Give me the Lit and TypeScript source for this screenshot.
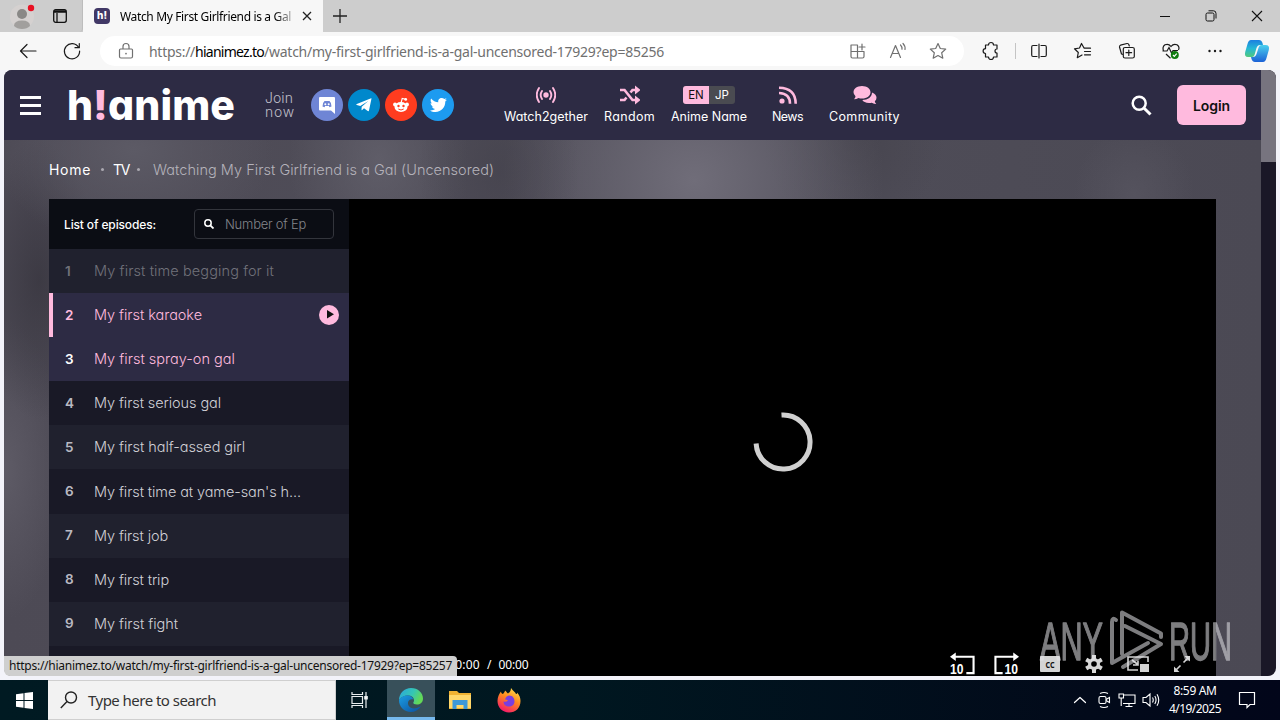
import {LitElement, html, css} from 'lit';
import {customElement, property, state} from 'lit/decorators.js';
import {classMap} from 'lit/directives/class-map.js';

interface Episode {
  no: number;
  title: string;
  width: number;
  seen?: boolean;
}

const episodes: Episode[] = [
  {no: 1, title: 'My first time begging for it', width: 180, seen: true},
  {no: 2, title: 'My first karaoke', width: 108},
  {no: 3, title: 'My first spray-on gal', width: 141},
  {no: 4, title: 'My first serious gal', width: 127},
  {no: 5, title: 'My first half-assed girl', width: 151},
  {no: 6, title: "My first time at yame-san's h...", width: 207},
  {no: 7, title: 'My first job', width: 74},
  {no: 8, title: 'My first trip', width: 75},
  {no: 9, title: 'My first fight', width: 84},
];

// toolbar and taskbar line icons
const line = (d: string, w = 20, size = 20) => html`
  <svg width=${w} height=${size} viewBox="0 0 ${w} ${size}" fill="none" stroke="currentColor" stroke-width="1.2"
    stroke-linecap="round" stroke-linejoin="round"><path d=${d}/></svg>`;

const backIcon = line('M18 10H2.5M9 3.5 2.5 10 9 16.500');
const reloadIcon = line('M16.600 6.500A7.600 7.600 0 1 0 17.600 10M17.300 2.500V6.700H13');
const lockIcon = line('M4.500 8H15.500Q16.500 8 16.500 9V15.500Q16.500 17 15 17H5Q3.500 17 3.500 15.500V9Q3.500 8 4.500 8ZM7 8V5.500A3 3 0 0 1 13 5.500V8M9.800 12.400H10.200V12.800H9.800Z');
const appsIcon = line('M3 4H9.500V17H4.500Q3 17 3 15.500ZM3 10.500H16V15.500Q16 17 14.500 17H9.500V10.500M14 3V9M11 6H17');
const starIcon = line('M10 2.500 12.300 7.500 17.700 8.100 13.700 11.800 14.800 17.200 10 14.500 5.200 17.200 6.300 11.800 2.300 8.100 7.700 7.500Z');
const puzzleIcon = line('M4.500 4H7.500A2.300 2.300 0 0 1 12.500 4H16V8A1.800 1.800 0 0 0 16 12V16H12.500A2.300 2.300 0 0 1 7.500 16H4.500V12.500A2.400 2.400 0 0 1 4.500 7.700Z');
const splitIcon = line('M8 4.500H4Q2.700 4.500 2.700 6V14Q2.700 15.500 4 15.500H8M12 4.500H16Q17.300 4.500 17.300 6V14Q17.300 15.500 16 15.500H12M10 3V17');
const favoritesIcon = line('M11 7 8.500 2.500 6.500 7 1.500 7.800 5.300 11.500 4.300 16.700 9 14M11.500 7.200H17.500M11.500 10.500H17.500M11.500 13.800H17.500');
const collectionsIcon = line('M6 13.500 4.500 13 2.500 6Q2.200 4.700 3.500 4.200L10 2.500Q11.500 2.300 12 4L12.300 5M8 6.500H15.500Q17.300 6.500 17.300 8V15.500Q17.300 17 15.500 17H8Q6.300 17 6.300 15.500V8Q6.300 6.500 8 6.500ZM11.800 9V14.500M9 11.700H14.600');
const readAloudIcon = line('M2.500 16.500 7.500 4.500 12.500 16.500M4.300 12.500H10.700M12.500 4Q14.300 5.800 14 8.200M15 2.500Q17.500 5 17 8.500');

@customElement('fit-text')
export class FitText extends LitElement {
  static styles = css`
    :host {
      display: inline-block;
      flex: none;
      white-space: pre;
    }
  `;

  @property({type: Number}) width = 0;

  // tracks the text out (or in) until it takes the given width
  firstUpdated() {
    const chars = (this.textContent || '').trim().length;
    const natural = this.getBoundingClientRect().width;
    if (chars && this.width) {
      this.style.letterSpacing = `${(this.width - natural) / chars}px`;
    }
  }

  render() {
    return html`<slot></slot>`;
  }
}

@customElement('browser-chrome')
export class BrowserChrome extends LitElement {
  static styles = css`
    :host {
      display: block;
      height: 70px;
      font-family: "Noto Sans", "Open Sans", sans-serif;
      color: #1b1b1b;
      background: #f7f7f7;
    }
    svg {
      display: block;
      flex: none;
    }
    .tabs {
      display: flex;
      height: 32px;
      background: #cdcdcd;
    }
    .left {
      display: flex;
      align-items: center;
      gap: 17px;
      width: 72px;
      padding-left: 10px;
      border-right: 1px solid #bdbdbd;
      border-bottom-right-radius: 4px;
    }
    .tab {
      display: flex;
      align-items: center;
      width: 229px;
      padding-left: 11px;
      background: #f7f7f7;
    }
    .favicon {
      width: 16px;
      height: 16px;
      border-radius: 4px;
      background: #413866;
      color: #fff;
      font: 800 10px/15px Inter, sans-serif;
      text-align: center;
    }
    .title {
      width: 172px;
      margin-left: 10px;
      overflow: hidden;
      font-size: 12px;
      color: #000;
      -webkit-mask-image: linear-gradient(90deg, #000 155px, #0004 172px);
    }
    .close {
      margin-left: 10px;
    }
    .plus {
      align-self: center;
      margin-left: 9px;
    }
    .window {
      display: flex;
      align-items: center;
      gap: 32px;
      margin-left: auto;
      padding-right: 16px;
    }
    .minimize {
      margin-right: 2px;
    }
    .bar {
      display: flex;
      align-items: center;
      height: 38px;
    }
    .nav {
      display: flex;
      gap: 24px;
      width: 82px;
      padding-left: 18px;
    }
    .address {
      display: flex;
      align-items: center;
      box-sizing: border-box;
      width: 864px;
      height: 30px;
      padding: 0 16px;
      border-radius: 15px;
      background: #fff;
      color: #707070;
    }
    .url {
      margin: 0 auto 0 13px;
      font-size: 14px;
      white-space: nowrap;
    }
    .domain {
      color: #000;
    }
    .page-actions {
      display: flex;
      gap: 20px;
    }
    .tools {
      display: flex;
      align-items: center;
      gap: 24px;
      padding-left: 17px;
    }
    .divider {
      width: 1px;
      height: 16px;
      margin: 0 -10.500px;
      background: #c4c4c4;
    }
    .copilot {
      margin-left: -5px;
    }
  `;

  render() {
    return html`
      <div class="tabs">
        <div class="left">
          <svg width="26" height="26" viewBox="0 0 26 26">
            <circle cx="12" cy="13.500" r="12" fill="#d5d1d0"/>
            <circle cx="12" cy="11" r="5" fill="#8a8886"/>
            <path d="M4 23Q4 17.500 12 17.500T20 23Q17 26 12 26T4 23Z" fill="#a19f9d"/>
            <circle cx="21" cy="5" r="3.200" fill="#e81123"/>
          </svg>
          <svg width="14" height="14" viewBox="0 0 14 14" fill="none" stroke="#111" stroke-width="1.300">
            <rect x=".7" y=".7" width="12.600" height="12.600" rx="2"/><path d="M1 2.500H13" stroke-width="2.500"/><path d="M4 4V13"/>
          </svg>
        </div>
        <div class="tab">
          <div class="favicon">h!</div>
          <div class="title"><fit-text width="171">Watch My First Girlfriend is a Gal</fit-text></div>
          <svg class="close" width="10" height="10" viewBox="0 0 10 10" stroke="#222" stroke-width="1.300"><path d="M1 1 9 9M9 1 1 9"/></svg>
        </div>
        <svg class="plus" width="16" height="16" viewBox="0 0 16 16" stroke="#222" stroke-width="1.300"><path d="M8 1V15M1 8H15"/></svg>
        <div class="window">
          <svg class="minimize" width="10" height="10" viewBox="0 0 10 10" stroke="#111"><path d="M0 5.500H10"/></svg>
          <svg width="14" height="12" viewBox="0 0 14 12" fill="none" stroke="#111">
            <rect x="2" y="3" width="8" height="8" rx="1.500"/><path d="M4.500 .8H9.500Q12 .8 12 3.500V8.500"/>
          </svg>
          <svg width="14" height="12" viewBox="0 0 14 12" stroke="#111" stroke-width="1.100"><path d="M2 1 12 11M12 1 2 11"/></svg>
        </div>
      </div>
      <div class="bar">
        <div class="nav">${backIcon}${reloadIcon}</div>
        <div class="address">
          ${lockIcon}
          <div class="url"><fit-text width="46">https://</fit-text><fit-text class="domain" width="69">hianimez.to</fit-text><fit-text width="400">/watch/my-first-girlfriend-is-a-gal-uncensored-17929?ep=85256</fit-text></div>
          <div class="page-actions">${appsIcon}${readAloudIcon}${starIcon}</div>
        </div>
        <div class="tools">
          ${puzzleIcon}
          <div class="divider"></div>
          ${splitIcon}${favoritesIcon}${collectionsIcon}
          <svg width="20" height="20" viewBox="0 0 20 20" fill="none" stroke="#1b1b1b" stroke-width="1.200">
            <path d="M2.500 10Q1 6 4 3.800Q7.500 2.200 10 5.500Q12.500 2.200 16 3.800Q19 6 17.500 9M1.500 10H6L8 6.500 10.500 12 12 9.500H17M5 13 9.500 17.200"/>
            <circle cx="13.800" cy="14" r="4" fill="#107c10" stroke="none"/><path d="M12 14 13.300 15.300 15.700 12.600" stroke="#fff"/>
          </svg>
          <svg width="20" height="20" viewBox="0 0 20 20" fill="#1b1b1b"><circle cx="4.500" cy="10" r="1.200"/><circle cx="10" cy="10" r="1.200"/><circle cx="15.500" cy="10" r="1.200"/></svg>
          <svg class="copilot" width="26" height="24" viewBox="0 0 26 24">
            <defs>
              <linearGradient id="cp1" x1="0" y1="0" x2="0" y2="1"><stop offset="0" stop-color="#1c7fe0"/><stop offset=".5" stop-color="#25b8d5"/><stop offset="1" stop-color="#52c97c"/></linearGradient>
              <linearGradient id="cp2" x1="0" y1="0" x2="0" y2="1"><stop offset="0" stop-color="#4bd0ee"/><stop offset="1" stop-color="#1c62d6"/></linearGradient>
            </defs>
            <path d="M7 1H15Q17.500 1 18.500 4L19 6H16Q13.500 6 12.500 9L10.500 16Q9.800 18 8 18H4Q0 18 1.200 13L3.500 5Q4.500 1 7 1Z" fill="url(#cp1)"/>
            <path d="M19 23H11Q8.500 23 7.500 20L7 18H9Q11.500 18 12.500 15L14.800 8Q15.500 6 17.500 6H21.500Q26 6 24.800 11L22.500 19Q21.500 23 19 23Z" fill="url(#cp2)"/>
          </svg>
        </div>
      </div>
    `;
  }
}

@customElement('site-header')
export class SiteHeader extends LitElement {
  static styles = css`
    :host {
      display: flex;
      align-items: center;
      box-sizing: border-box;
      width: 1257px;
      height: 70px;
      padding: 0 15px 0 16px;
      background: #2d2b44;
      color: #fff;
    }
    svg {
      display: block;
    }
    .burger {
      display: flex;
      flex-direction: column;
      gap: 5px;
      width: 21px;
    }
    .burger i {
      height: 3px;
      background: #fff;
    }
    .logo {
      display: flex;
      margin: 0 0 0 26px;
      font-size: 41px;
      font-weight: 800;
      line-height: 44px;
    }
    .bang {
      color: #ffbade;
      margin: 0 2px 0 1px;
    }
    .join {
      margin-left: 30px;
      width: 46px;
      padding-bottom: 1px;
      font-size: 14px;
      font-weight: 300;
      line-height: 14px;
      color: #bdbcc6;
    }
    .social {
      display: flex;
      gap: 5px;
    }
    .round {
      display: flex;
      align-items: center;
      justify-content: center;
      width: 32px;
      height: 32px;
      border-radius: 50%;
    }
    .discord { background: #6f85d5; }
    .telegram { background: #08c; }
    .reddit { background: #ff3c1f; }
    .twitter { background: #1d9bf0; }
    .menu {
      display: flex;
      margin-left: 50px;
      padding-bottom: 2px;
    }
    .item {
      display: flex;
      flex-direction: column;
      align-items: center;
      gap: 4px;
      font-size: 12.500px;
      line-height: 15px;
      color: #fff;
    }
    .item svg {
      height: 20px;
      color: #ffbade;
    }
    .i0 { width: 84px; margin-right: 16px; }
    .i1 { width: 51px; margin-right: 16px; }
    .i2 { width: 76px; margin-right: 25px; }
    .i3 { width: 31px; margin-right: 26px; }
    .i4 { width: 71px; }
    .lang {
      display: flex;
      height: 18px;
      margin: 1px 0;
      border-radius: 3px;
      overflow: hidden;
      background: #4a4b51;
      font-size: 11.500px;
      line-height: 18px;
      text-align: center;
    }
    .lang span { width: 26px; }
    .lang .on { background: #ffbade; color: #111; }
    .search { margin-left: auto; }
    .login {
      width: 69px;
      height: 40px;
      margin-left: 25px;
      border-radius: 6px;
      background: #ffbade;
      color: #111;
      font-size: 14px;
      font-weight: 600;
      line-height: 41px;
      text-align: center;
    }
  `;

  render() {
    return html`
      <div class="burger"><i></i><i></i><i></i></div>
      <div class="logo"><fit-text width="25">h</fit-text><fit-text class="bang" width="13">!</fit-text><fit-text width="127">anime</fit-text></div>
      <div class="join"><fit-text width="28">Join</fit-text><br><fit-text width="30">now</fit-text></div>
      <div class="social">
        <div class="round discord">
          <svg width="16" height="18" viewBox="0 0 16 18"><path fill="#fff" d="M1 1H15Q16 1 16 2V18L12 14.500H1Q0 14.500 0 13.500V2Q0 1 1 1Z"/><path fill="#6f85d5" d="M3.500 10.500Q3.500 6.500 5.500 5H10.500Q12.500 6.500 12.500 10.500L10.500 11.300 9.800 10H6.200L5.500 11.300Z"/><circle cx="6.300" cy="8.300" r="1" fill="#fff"/><circle cx="9.700" cy="8.300" r="1" fill="#fff"/></svg>
        </div>
        <div class="round telegram">
          <svg width="16" height="14" viewBox="0 0 16 14" fill="#fff"><path d="M15.500.6 13 12.500Q12.700 13.700 11.700 13L8 10.300 6.200 12Q5.600 12.600 5.500 11.600L5.700 8.800 12.300 3 4.300 8 .8 6.900Q-.3 6.400.8 5.900L14.500.4Q15.700 0 15.500.6Z"/></svg>
        </div>
        <div class="round reddit">
          <svg width="16" height="16" viewBox="0 0 16 16"><path d="M8 6 9.200 1.500 12.500 2.300" fill="none" stroke="#fff" stroke-width="1.100"/><circle cx="12.700" cy="2.400" r="1.400" fill="#fff"/><circle cx="2" cy="7.500" r="1.900" fill="#fff"/><circle cx="14" cy="7.500" r="1.900" fill="#fff"/><ellipse cx="8" cy="10" rx="6.500" ry="5" fill="#fff"/><circle cx="5.500" cy="9" r="1.200" fill="#ff3c1f"/><circle cx="10.500" cy="9" r="1.200" fill="#ff3c1f"/><path d="M5.300 12Q8 14 10.700 12" fill="none" stroke="#ff3c1f"/></svg>
        </div>
        <div class="round twitter">
          <svg width="17" height="14" viewBox="0 0 17 14" fill="#fff"><path d="M17 1.700 15.300 3.600C15.400 9 11.500 14 5.400 14 3.400 14 1.500 13.400 0 12.400 1.900 12.600 3.700 12.100 5.200 11 3.600 10.900 2.400 9.900 1.900 8.500H3.500C1.800 8.100.6 6.700.6 5L2.200 5.400C.6 4.300.200 2.200 1.100.5 2.900 2.700 5.500 4.100 8.300 4.200 7.800 1.900 9.500 0 11.700 0 12.700 0 13.600.4 14.300 1.100L16.500.3 15 2.200Z"/></svg>
        </div>
      </div>
      <div class="menu">
        <div class="item i0">
          <svg width="20" viewBox="0 0 20 20" fill="none" stroke="currentColor" stroke-width="1.900" stroke-linecap="round"><circle cx="10" cy="10" r="2.700" fill="currentColor" stroke="none"/><path d="M6 6Q3.300 10 6 14M14 6Q16.700 10 14 14M3 3Q-1.500 10 3 17M17 3Q21.500 10 17 17"/></svg>
          <fit-text width="84">Watch2gether</fit-text>
        </div>
        <div class="item i1">
          <svg width="20" viewBox="0 0 20 20" fill="none" stroke="currentColor" stroke-width="2.600"><path d="M0 5H4.500L12.500 15H16M0 15H4.500L6.500 12.500M10.500 7.500 12.500 5H16"/><path d="M15 .5 20.500 5 15 9.500ZM15 10.500 20.500 15 15 19.500Z" fill="currentColor" stroke="none"/></svg>
          <fit-text width="51">Random</fit-text>
        </div>
        <div class="item i2">
          <div class="lang"><span class="on">EN</span><span>JP</span></div>
          <fit-text width="76">Anime Name</fit-text>
        </div>
        <div class="item i3">
          <svg width="18" viewBox="0 0 18 20" fill="none" stroke="currentColor" stroke-width="2.600"><circle cx="3" cy="16" r="2.600" fill="currentColor" stroke="none"/><path d="M0 8Q11 8.500 11 18.700M0 2.800Q16.500 3 16.700 18.700"/></svg>
          <fit-text width="31">News</fit-text>
        </div>
        <div class="item i4">
          <svg width="24" viewBox="0 0 24 20" fill="currentColor"><path d="M9 1C14 1 17.500 3.800 17.500 7.300S14 13.600 9 13.600Q7 13.600 5.500 13Q3.500 14.300 1 14.300 2.500 12.800 2.500 11.300 .5 9.500 .5 7.300C.5 3.800 4 1 9 1Z"/><path d="M19 7.500C22 8.500 23.500 10.500 23.500 12.800Q23.500 15 21.800 16.300 22 17.800 23.300 19 21 19 18.800 17.700C14 18.800 10.500 17 9.300 15 15 15 19 12 19 7.500Z"/></svg>
          <fit-text width="71">Community</fit-text>
        </div>
      </div>
      <svg class="search" width="21" height="21" viewBox="0 0 21 21" fill="none" stroke="#fff"><circle cx="8.200" cy="8.200" r="6.500" stroke-width="2.500"/><path d="M12.700 12.700 19.500 19.500" stroke-width="3"/></svg>
      <div class="login"><fit-text width="37">Login</fit-text></div>
    `;
  }
}

@customElement('episode-list')
export class EpisodeList extends LitElement {
  static styles = css`
    :host {
      display: block;
      flex: none;
      width: 300px;
      background: #191926;
    }
    .head {
      display: flex;
      align-items: center;
      justify-content: space-between;
      height: 50px;
      padding: 0 15px;
      background: #0b0d14;
      color: #fff;
      font-size: 12px;
      font-weight: 500;
    }
    .filter {
      display: flex;
      align-items: center;
      gap: 11px;
      box-sizing: border-box;
      width: 140px;
      height: 30px;
      padding-left: 9px;
      border: 1px solid #33353c;
      border-radius: 4px;
      color: #83858b;
      font-size: 13px;
      font-weight: 300;
    }
    .row {
      display: flex;
      align-items: center;
      box-sizing: border-box;
      height: 44.100px;
      padding: 0 10px 1px 16px;
      color: #d0d0d6;
      font-size: 14.500px;
      font-weight: 300;
      cursor: pointer;
    }
    .row:nth-child(odd) {
      background: #20212e;
    }
    .no {
      width: 29px;
      font-size: 13.500px;
      font-weight: 600;
      color: #b9b9c2;
    }
    .seen, .seen .no {
      color: #70717a;
    }
    .row.hover, .row.active {
      background: #2d2b44;
      color: #ffbade;
    }
    .hover .no {
      color: #fff;
    }
    .row.active {
      padding-left: 12px;
      border-left: 4px solid #ffbade;
    }
    .active .no {
      color: #ffbade;
    }
    .play {
      margin: 1px 0 0 auto;
    }
  `;

  @state() current = 2;
  @state() hovered = 3;

  renderRow(ep: Episode) {
    const classes = {
      row: true,
      seen: !!ep.seen,
      active: ep.no === this.current,
      hover: ep.no === this.hovered,
    };
    return html`
      <div class=${classMap(classes)} @click=${() => (this.current = ep.no)} @mouseenter=${() => (this.hovered = ep.no)}>
        <span class="no">${ep.no}</span>
        <fit-text width=${ep.width}>${ep.title}</fit-text>
        ${ep.no === this.current ? html`
          <svg class="play" width="20" height="20" viewBox="0 0 20 20"><circle cx="10" cy="10" r="10" fill="#ffbade"/><path d="M8 5 15 9.200 8 13.500Z" fill="#111"/></svg>` : ''}
      </div>
    `;
  }

  render() {
    return html`
      <div class="head">
        <fit-text width="92">List of episodes:</fit-text>
        <div class="filter">
          <svg width="10" height="10" viewBox="0 0 10 10" fill="none" stroke="#fff"><circle cx="4" cy="4" r="3.200" stroke-width="1.500"/><path d="M6.300 6.300 9.500 9.500" stroke-width="1.800"/></svg>
          <fit-text width="81">Number of Ep</fit-text>
        </div>
      </div>
      <div>${episodes.map((ep) => this.renderRow(ep))}</div>
    `;
  }
}

@customElement('video-player')
export class VideoPlayer extends LitElement {
  static styles = css`
    :host {
      display: flex;
      flex-direction: column;
      width: 867px;
      background: #000;
      color: #fff;
    }
    .stage {
      display: flex;
      align-items: center;
      justify-content: center;
      height: 443px;
    }
    .spinner {
      margin-top: 43px;
    }
    .controls {
      display: flex;
      align-items: center;
      height: 44px;
      margin-top: 1px;
      padding: 0 12px 0 99px;
      font: 12px "Noto Sans", "Open Sans", sans-serif;
    }
    .time {
      display: flex;
      gap: 7px;
      margin-right: auto;
    }
    .button {
      display: flex;
      justify-content: center;
      width: 43.900px;
    }
    .ten {
      font: 700 16px "Liberation Sans", sans-serif;
    }
  `;

  render() {
    return html`
      <div class="stage">
        <svg class="spinner" width="60" height="60" viewBox="0 0 60 60" fill="none" stroke="#d0d0d0" stroke-width="5"><path d="M28.500 3.100A27 27 0 1 1 3.100 31.500"/></svg>
      </div>
      <div class="controls">
        <div class="time"><fit-text width="32">00:00</fit-text><span>/</span><fit-text width="30">00:00</fit-text></div>
        <div class="button">
          <svg width="25" height="24" viewBox="0 0 26 24" fill="none" stroke="#fff" stroke-width="2.200"><path d="M4 4.500H24.500V21.500H17"/><path d="M6 0V9L0 4.500Z" fill="#fff" stroke="none"/><text class="ten" x="0" y="22.500" textLength="14" lengthAdjust="spacingAndGlyphs" fill="#fff" stroke="none">10</text></svg>
        </div>
        <div class="button">
          <svg width="25" height="24" viewBox="0 0 26 24" fill="none" stroke="#fff" stroke-width="2.200"><path d="M22 4.500H1.500V21.500H9"/><path d="M20 0V9L26 4.500Z" fill="#fff" stroke="none"/><text class="ten" x="11" y="22.500" textLength="14" lengthAdjust="spacingAndGlyphs" fill="#fff" stroke="none">10</text></svg>
        </div>
        <div class="button">
          <svg width="20" height="16" viewBox="0 0 20 16"><rect width="20" height="16" rx="1" fill="#d4d4d4"/><text x="5.500" y="11.500" font-size="9.500" font-weight="700" textLength="9" lengthAdjust="spacingAndGlyphs" fill="#111">CC</text></svg>
        </div>
        <div class="button">
          <svg width="18" height="18" viewBox="-9 -9 18 18"><g stroke="#d8d8d8" stroke-width="4"><path d="M0-9V9M-7.800-4.500 7.800 4.500M-7.800 4.500 7.800-4.500"/></g><circle r="6" fill="#d8d8d8"/><circle r="2.800" fill="#000"/></svg>
        </div>
        <div class="button">
          <svg width="22" height="16" viewBox="0 0 22 16" fill="none" stroke="#d4d4d4" stroke-width="1.600"><path d="M11 14H1V1H21V6"/><path d="M5 4 11 8.500M11 4.500V9H6"/><rect x="13" y="8" width="9" height="8" fill="#d4d4d4" stroke="none"/></svg>
        </div>
        <div class="button">
          <svg width="16" height="16" viewBox="0 0 16 16" fill="none" stroke="#d4d4d4" stroke-width="1.600"><path d="M9.500 6.500 14 2M6.500 9.500 2 14"/><path d="M10.500 0H16V5.500ZM0 10.500V16H5.500Z" fill="#d4d4d4" stroke="none"/></svg>
        </div>
      </div>
    `;
  }
}

@customElement('task-bar')
export class TaskBar extends LitElement {
  static styles = css`
    :host {
      display: flex;
      height: 40px;
      background: linear-gradient(90deg, #001a22, #001720 45%, #020a1a 85%, #02061a);
      color: #fff;
      font-family: "Noto Sans", "Open Sans", sans-serif;
    }
    svg {
      display: block;
      flex: none;
    }
    .cell {
      display: flex;
      align-items: center;
      justify-content: center;
      box-sizing: border-box;
      width: 48px;
      height: 40px;
    }
    .search {
      display: flex;
      align-items: center;
      gap: 10px;
      box-sizing: border-box;
      width: 288px;
      padding-left: 12px;
      border: 1px solid #cfcfcf;
      border-left-width: 0;
      background: #f2f2f2;
      color: #333;
      font-size: 15px;
    }
    .open {
      margin: 0 1px 0 3px;
      border-bottom: 3px solid #76b9ed;
      padding-top: 3px;
      background: #38505a;
    }
    .firefox {
      margin-left: 1px;
    }
    .tray {
      display: flex;
      align-items: center;
      gap: 6px;
      margin-left: auto;
      padding-right: 24px;
    }
    .clock {
      display: flex;
      flex-direction: column;
      align-items: center;
      width: 52px;
      font-size: 12px;
      line-height: 18px;
      margin: -1px 11px 0 2px;
    }
  `;

  render() {
    return html`
      <div class="cell">
        <svg width="17" height="17" viewBox="0 0 17 17" fill="#fff"><path d="M0 2.300 7.500 1.200V8H0ZM8.500 1 17 0V8H8.500ZM0 9H7.500V15.800L0 14.700ZM8.500 9H17V17L8.500 16Z"/></svg>
      </div>
      <div class="search">
        <svg width="18" height="18" viewBox="0 0 18 18" fill="none" stroke="#222" stroke-width="1.400"><circle cx="11" cy="6.500" r="5.500"/><path d="M7 10.500 .8 17"/></svg>
        <fit-text width="128">Type here to search</fit-text>
      </div>
      <div class="cell">
        <svg width="18" height="18" viewBox="0 0 18 18" fill="none" stroke="#e8eef0" stroke-width="1.200"><path d="M1 1V3.500H11.500V1M1 17V14.500H11.500V17M1 5.500H11.500V12.500H1ZM15 1V17"/><path d="M13.800 5.500H16.200V8H13.800Z" fill="#fff"/></svg>
      </div>
      <div class="cell open">
        <svg width="24" height="24" viewBox="0 0 24 24">
          <defs>
            <linearGradient id="e1" x1="0" y1="0" x2="1" y2=".4"><stop offset="0" stop-color="#2aa5e0"/><stop offset=".6" stop-color="#35c6b4"/><stop offset="1" stop-color="#63d957"/></linearGradient>
            <linearGradient id="e2" x1="0" y1="0" x2="1" y2="1"><stop offset="0" stop-color="#1b9de2"/><stop offset="1" stop-color="#0c4f9e"/></linearGradient>
          </defs>
          <path d="M12 0C19 0 24 5 24 10.500 24 14.500 21 16.500 18 16.500 15.500 16.500 14 15.500 14.300 14.500 16 13 15 7.500 9.500 7.500 5 7.500 1 9.500 0 12.500 0 5 5.500 0 12 0Z" fill="url(#e1)"/>
          <path d="M0 12.500C1 9 5 7.500 8.500 7.500 11.500 7.500 14 9.500 14.300 11.500 10 10.500 8 14 9.500 17.500 11.500 21 17 21.500 22 18 19.500 22 16 24 12 24 5 24 0 18.500 0 12.500Z" fill="url(#e2)"/>
        </svg>
      </div>
      <div class="cell">
        <svg width="22" height="20" viewBox="0 0 22 20"><path d="M0 1H8L10 3H22V19H0Z" fill="#f0b232"/><path d="M0 5H22V18H0Z" fill="#ffd76a"/><path d="M3.500 10H18.500V19H14.500V15H7.500V19H3.500Z" fill="#3c98d8"/></svg>
      </div>
      <div class="cell firefox">
        <svg width="24" height="25" viewBox="0 0 24 25">
          <defs><linearGradient id="fx" x1=".8" y1="0" x2=".3" y2="1"><stop offset="0" stop-color="#ffe14d"/><stop offset=".45" stop-color="#ff8a1e"/><stop offset="1" stop-color="#f5156c"/></linearGradient></defs>
          <path d="M14 0C16 3 18.500 4 19 6 20.500 6 20 4.500 20 4.500 22.500 7 23.500 10 23.500 13 23.500 20 18.500 24.500 12 24.500S.5 19.500 .5 13C.5 9 2 6 4 3.500 4 5 5 6 6 6 8 4 8 2.500 8 2.500 10 4 10 5 11 5.500 12.500 4.500 14 3 14 0Z" fill="url(#fx)"/>
          <path d="M12 7.500C16 7.500 17.500 10.500 17.500 13.500S15 18.500 12 18.500 6.500 16.500 6.500 13.500Q9 14.500 11 12.500 9 11 8 11.500 9 8 12 7.500Z" fill="#7a3ee0"/>
        </svg>
      </div>
      <div class="tray">
        ${line('M4.500 12.500 10 7.500 15.500 12.500', 20, 20)}
        <svg width="16" height="18" viewBox="0 0 16 18" fill="none" stroke="#fff" stroke-width="1.100"><rect x="3" y="5.500" width="7" height="7" rx="1.500"/><path d="M10 8.500 13.500 6.500V11.500L10 9.500M4 2.500Q8 .5 12 2.500M4 15.500Q8 17.500 12 15.500"/></svg>
        <svg width="18" height="16" viewBox="0 0 18 16" fill="none" stroke="#fff" stroke-width="1.100"><path d="M5.500 3H17V11.500H5M11 11.500V14.500M7.500 14.500H14.500M1 2H5.500V6H1ZM3.200 6V14"/></svg>
        <svg width="19" height="16" viewBox="0 0 19 16" fill="none" stroke="#fff" stroke-width="1.100"><path d="M1 5.500H4L8 2V14L4 10.500H1ZM10.500 5.500Q12 8 10.500 10.500M12.800 4Q15.300 8 12.800 12M15 2.200Q18.500 8 15 13.800"/></svg>
        <div class="clock"><fit-text width="43">8:59 AM</fit-text><fit-text width="52">4/19/2025</fit-text></div>
        <svg width="18" height="18" viewBox="0 0 18 18" fill="none" stroke="#fff" stroke-width="1.200"><path d="M1.500 1.500H16.500V13.500H12L9 16.500V13.500H1.500Z"/></svg>
      </div>
    `;
  }
}

@customElement('app-root')
export class AppRoot extends LitElement {
  static styles = css`
    :host {
      display: block;
      position: relative;
      width: 1280px;
      height: 720px;
      overflow: hidden;
      background: #f3f3fa;
      font-family: Inter, "Open Sans", sans-serif;
      font-feature-settings: "cv11";
    }
    .view {
      display: flex;
      width: 1272px;
      height: 606px;
      margin: 0 4px 4px;
      border-radius: 8px;
      overflow: hidden;
    }
    .page {
      width: 1257px;
      background:
        radial-gradient(ellipse 80px 130px at 495px 100px, #403e4888, transparent),
        radial-gradient(ellipse 190px 190px at 690px 110px, #706d79, #706d7900),
        radial-gradient(ellipse 90px 120px at 375px 90px, #63616ccc, #63616c00),
        radial-gradient(ellipse 90px 90px at 850px 70px, #43414aaa, transparent),
        radial-gradient(ellipse 60px 70px at 1130px 125px, #5c5a6588, #5c5a6500),
        radial-gradient(ellipse 140px 100px at 130px 80px, #5c5a65, #5c5a6500),
        radial-gradient(ellipse 60px 140px at 35px 210px, #34323baa, transparent),
        radial-gradient(ellipse 60px 150px at 0 400px, #5e5b66, #5e5b6600),
        linear-gradient(90deg, #4d4a55, #504e59 50%, #4b4954);
    }
    .crumbs {
      display: flex;
      align-items: center;
      box-sizing: border-box;
      height: 59px;
      padding: 0 0 1px 45px;
      color: #fff;
      font-size: 14px;
    }
    .dot {
      width: 3px;
      height: 3px;
      border-radius: 50%;
      background: #aaa8b0;
    }
    .d1 { margin: 0 9px 0 10px; }
    .d2 { margin: 0 13px 0 8px; }
    .here {
      color: #b4b2ba;
      font-size: 14.500px;
      font-weight: 300;
    }
    .watch {
      display: flex;
      width: 1167px;
      height: 487px;
      margin-left: 45px;
    }
    .scroll {
      width: 15px;
      background: #1a1727;
    }
    .thumb {
      height: 92px;
      background: #77747f;
    }
    .status {
      position: absolute;
      left: 4px;
      top: 656px;
      box-sizing: border-box;
      width: 453px;
      height: 20px;
      padding-left: 5px;
      border-radius: 0 4px 0 6px;
      background: #cfcfcf;
      color: #111;
      font: 12px/19px "Noto Sans", "Open Sans", sans-serif;
    }
    .watermark {
      position: absolute;
      left: 1036px;
      top: 606px;
      opacity: .55;
      pointer-events: none;
    }
    .watermark text {
      font: 400 24px "Liberation Sans", sans-serif;
    }
  `;

  render() {
    return html`
      <browser-chrome></browser-chrome>
      <div class="view">
        <div class="page">
          <site-header></site-header>
          <div class="crumbs">
            <fit-text width="42">Home</fit-text>
            <i class="dot d1"></i>
            <fit-text width="16">TV</fit-text>
            <i class="dot d2"></i>
            <fit-text class="here" width="341">Watching My First Girlfriend is a Gal (Uncensored)</fit-text>
          </div>
          <div class="watch">
            <episode-list></episode-list>
            <video-player></video-player>
          </div>
        </div>
        <div class="scroll"><div class="thumb"></div></div>
      </div>
      <task-bar></task-bar>
      <div class="status"><fit-text width="443">https://hianimez.to/watch/my-first-girlfriend-is-a-gal-uncensored-17929?ep=85257</fit-text></div>
      <svg class="watermark" width="200" height="74" viewBox="0 0 200 74" fill="none" stroke="#e4e4e8" stroke-width="4.500" stroke-linejoin="round" stroke-linecap="round">
        <g fill="#e4e4e8" stroke="#e4e4e8" stroke-width=".6">
          <text transform="translate(4 54) scale(1 2.200)" textLength="63" lengthAdjust="spacingAndGlyphs">ANY</text>
          <text transform="translate(133 54) scale(1 2.200)" textLength="63" lengthAdjust="spacingAndGlyphs">RUN</text>
        </g>
        <path d="M86 48V6.500L125 27.500V31M89 20 125 38 87 61M80 14Q76 11 76 16V57L112 37" stroke-width="4"/>
      </svg>
    `;
  }
}
